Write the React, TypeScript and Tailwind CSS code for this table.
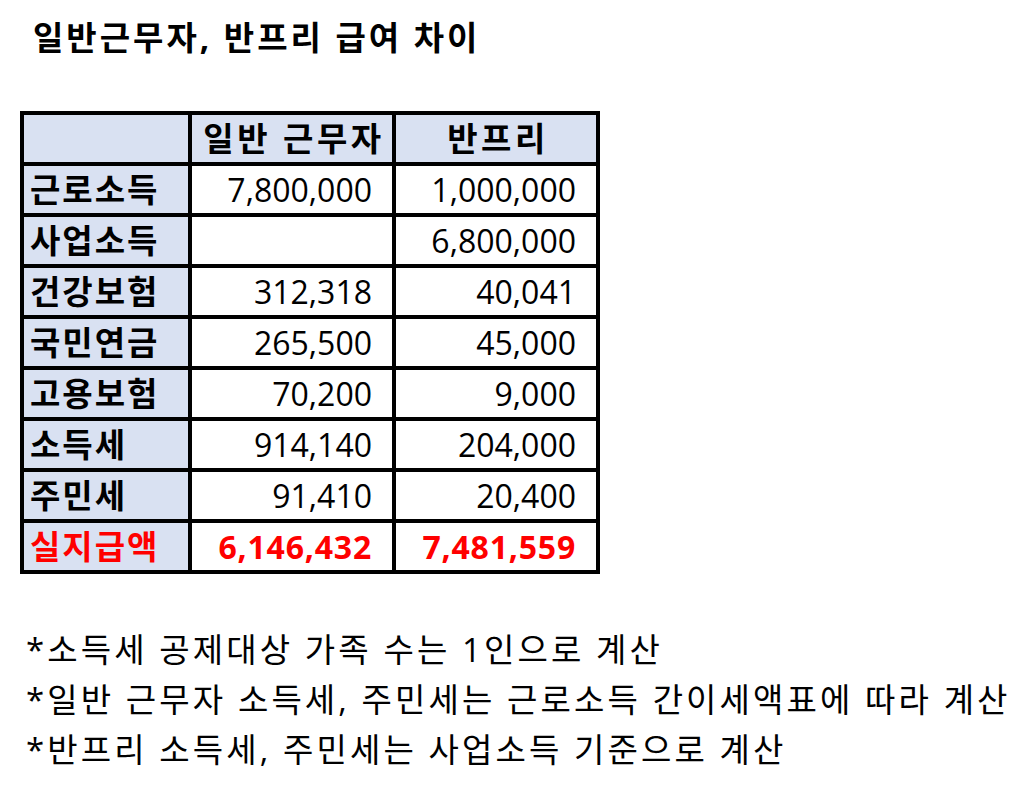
const rows: { label: string; a: string; b: string }[] = [
  { label: "근로소득", a: "7,800,000", b: "1,000,000" },
  { label: "사업소득", a: "", b: "6,800,000" },
  { label: "건강보험", a: "312,318", b: "40,041" },
  { label: "국민연금", a: "265,500", b: "45,000" },
  { label: "고용보험", a: "70,200", b: "9,000" },
  { label: "소득세", a: "914,140", b: "204,000" },
  { label: "주민세", a: "91,410", b: "20,400" },
];

const notes = [
  "*소득세 공제대상 가족 수는 1인으로 계산",
  "*일반 근무자 소득세, 주민세는 근로소득 간이세액표에 따라 계산",
  "*반프리 소득세, 주민세는 사업소득 기준으로 계산",
];

export default function App() {
  return (
    <div className="w-[1027px] h-[794px] bg-white text-black font-['Open_Sans','Noto_Sans_CJK_KR',sans-serif]">
      <h1 className="pl-[33px] pt-[18px] text-[33px] leading-[40px] font-bold tracking-[3px]">
        일반근무자, 반프리 급여 차이
      </h1>

      <div className="ml-[20px] mt-[53px] w-[580px] grid grid-cols-[164px_200px_200px] auto-rows-[47px] gap-[4px] p-[4px] bg-black">
        <div className="bg-[#D9E1F2]" />
        <div className="bg-[#D9E1F2] flex items-center justify-center pl-[4px] text-[33px] font-bold tracking-[3.5px]">
          일반 근무자
        </div>
        <div className="bg-[#D9E1F2] flex items-center justify-center pl-[4px] text-[33px] font-bold tracking-[3.5px]">
          반프리
        </div>

        {rows.map((r) => (
          <>
            <div key={r.label} className="bg-[#D9E1F2] flex items-center pl-[6px] text-[33px] font-bold tracking-[2px]">
              {r.label}
            </div>
            <div className="bg-white flex items-center justify-end pr-[20px] text-[32px]">{r.a}</div>
            <div className="bg-white flex items-center justify-end pr-[20px] text-[32px]">{r.b}</div>
          </>
        ))}

        <div className="bg-[#D9E1F2] flex items-center pl-[6px] text-[33px] font-bold tracking-[2px] text-[#FF0000]">
          실지급액
        </div>
        <div className="bg-white flex items-center justify-end pr-[20px] text-[32px] font-bold tracking-[0.8px] text-[#FF0000]">
          6,146,432
        </div>
        <div className="bg-white flex items-center justify-end pr-[20px] text-[32px] font-bold tracking-[0.8px] text-[#FF0000]">
          7,481,559
        </div>
      </div>

      <div className="pl-[26px] mt-[51px] text-[33px] leading-[50px] tracking-[3.1px]">
        {notes.map((n) => (
          <div key={n}>{n}</div>
        ))}
      </div>
    </div>
  );
}
